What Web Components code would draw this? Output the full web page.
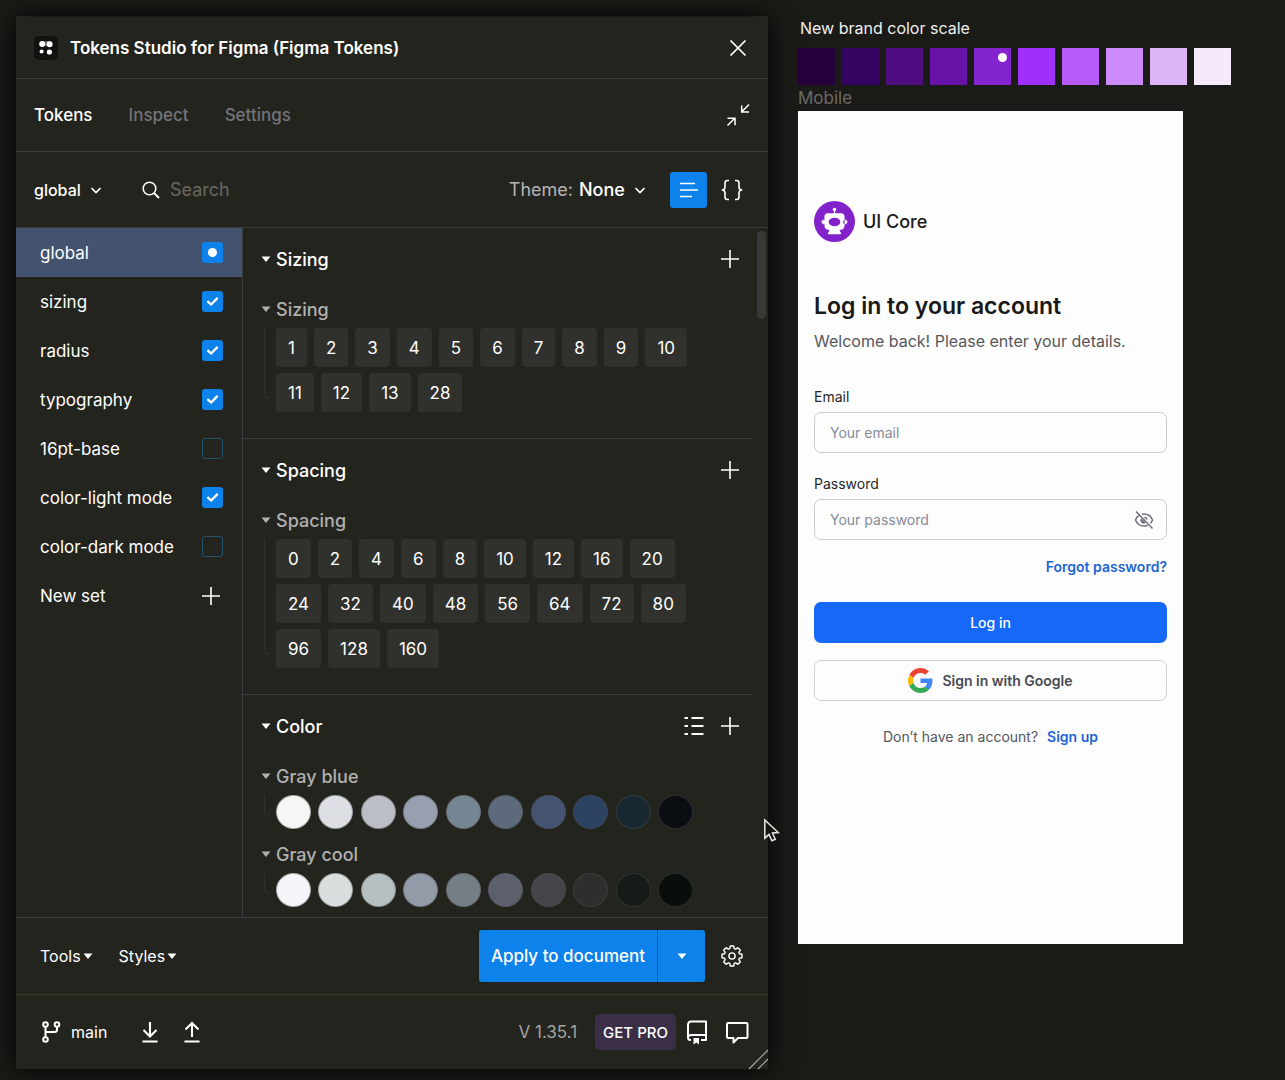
<!DOCTYPE html>
<html lang="en">
<head>
<meta charset="utf-8">
<meta name="viewport" content="width=device-width, initial-scale=1">
<title>Tokens Studio for Figma</title>
<style>
  * { box-sizing: border-box; }
  body {
    margin: 0;
    background: #1a1a16;
    color: #fff;
    font-family: Inter, "Liberation Sans", sans-serif;
    font-size: 16px;
    --panel: #24241e;
    --line: #3a3a40;
    --blue: #0d82ea;
  }
</style>
</head>
<body>
<ts-workspace></ts-workspace>

<script>
const ICONS = {
  logo: [24, '<rect width="24" height="24" rx="5" fill="#11110f"/><g fill="#fff"><circle cx="8.2" cy="8" r="3"/><circle cx="15.6" cy="8.2" r="3"/><circle cx="7.6" cy="15.6" r="2"/><circle cx="15.4" cy="16" r="2.6"/><path d="M8 5h8v5H8z" opacity=".35"/></g>'],
  close: [20, '<path d="M2.5 2.5l15 15M17.5 2.5l-15 15" stroke="currentColor" stroke-width="1.7"/>'],
  minimize: [24, '<path d="M23 1.5L16 8.5M15.700 2.500V9H23M1.500 22.500L8.500 15.500M1.500 15.300H9V22.200" fill="none" stroke="currentColor" stroke-width="1.5"/>'],
  search: [20, '<circle cx="8.500" cy="8.500" r="6.300" fill="none" stroke="currentColor" stroke-width="1.600"/><path d="M13 13l5 5" stroke="currentColor" stroke-width="1.800"/>'],
  chevron: [12, '<path d="M1.500 4l4.500 4.500L10.500 4" fill="none" stroke="currentColor" stroke-width="1.700"/>'],
  lines: [20, '<path d="M1 3.500h15M1 10h18M1 16.500h12" stroke="currentColor" stroke-width="1.500"/>'],
  braces: [24, '<path d="M9 2.500H7.500C5.700 2.500 5 3.300 5 5v4c0 2-.8 3-3.200 3C4.200 12 5 13 5 15v4c0 1.700.7 2.500 2.500 2.500H9M15 2.500h1.500c1.800 0 2.500.8 2.500 2.500v4c0 2 .8 3 3.200 3-2.400 0-3.200 1-3.200 3v4c0 1.700-.7 2.500-2.500 2.500H15" fill="none" stroke="currentColor" stroke-width="1.600"/>'],
  plus: [20, '<path d="M10 1v18M1 10h18" stroke="currentColor" stroke-width="1.600"/>'],
  caret: [10, '<path d="M.500 2.500h9L5 8z" fill="currentColor"/>'],
  list: [20, '<path d="M.500 2H4M7.500 2H19.500M.500 10H4M7.500 10H19.500M.500 18H4M7.500 18H19.500" stroke="currentColor" stroke-width="1.800"/>'],
  gear: [22, '<path d="M9.300 1.500h3.400l.5 2.600 1.500.6 2.200-1.500 2.400 2.400-1.500 2.200.6 1.500 2.600.5v3.400l-2.600.5-.6 1.500 1.500 2.200-2.400 2.400-2.200-1.500-1.500.6-.5 2.600H9.300l-.5-2.600-1.500-.6-2.200 1.500-2.400-2.400 1.500-2.200-.6-1.500L1 13.200V9.800l2.600-.5.6-1.500-1.500-2.200 2.400-2.400 2.200 1.500 1.500-.6z" transform="translate(0 -.5)" fill="none" stroke="currentColor" stroke-width="1.400" stroke-linejoin="round"/><circle cx="11" cy="11" r="3.100" fill="none" stroke="currentColor" stroke-width="1.400"/>'],
  branch: [22, '<g fill="none" stroke="currentColor" stroke-width="2"><circle cx="4.500" cy="3.500" r="2.300"/><circle cx="16" cy="3.500" r="2.300"/><circle cx="4.500" cy="18.500" r="2.300"/><path d="M4.500 6v10M16 6v2.500c0 1.700-.8 2.500-2.500 2.500h-9"/></g>'],
  pull: [22, '<path d="M11 1v14M4.500 9l6.500 6.500L17.500 9M3.500 20.500h15" fill="none" stroke="currentColor" stroke-width="2.100"/>'],
  push: [22, '<path d="M11 16V2M4.500 8.500L11 2l6.500 6.500M3.500 20.500h15" fill="none" stroke="currentColor" stroke-width="2.100"/>'],
  book: [24, '<path d="M6 20H5.500C4 20 3 19 3 17.500v-12C3 2.500 4 1.500 6 1.500h15V20h-5M3.200 17c.5-1.500 1.500-2 3-2H21" fill="none" stroke="currentColor" stroke-width="2" stroke-linejoin="round"/><path d="M8.500 18h5.500v6.500l-2.700-2-2.800 2z" fill="currentColor"/>'],
  comment: [24, '<path d="M3 3h18.500c.6 0 1 .4 1 1v13c0 .6-.4 1-1 1H13l-4.500 4.500V18H3c-.6 0-1-.4-1-1V4c0-.6.4-1 1-1z" fill="none" stroke="currentColor" stroke-width="2" stroke-linejoin="round"/>'],
  resize: [20, '<path d="M1 20L20 1M10 20L20 10" stroke="#aaa" stroke-width="1.200"/>'],
  cursor: [26, '<path d="M5 2v19l4.400-4 2.900 6.700 3.600-1.600-2.900-6.500 6-.5z" fill="#15150f" stroke="#e4e4e4" stroke-width="1.600"/>'],
  eyeoff: [20, '<g fill="none" stroke="currentColor" stroke-width="1.500"><path d="M2 1.500l16.500 17"/><path d="M4.800 5.300C3.200 6.500 2 8.300 1.500 10c1.300 3.500 4.600 6 8.500 6 1.300 0 2.500-.2 3.600-.7M8 4.200c.7-.1 1.300-.2 2-.2 3.900 0 7.200 2.500 8.500 6-.4 1.200-1.100 2.300-2 3.200M10.500 7.200c1.300.3 2.200 1.200 2.400 2.500"/></g><path d="M7.300 8.500a3 3 0 0 0 4.500 4z" fill="currentColor"/>'],
  robot: [42, '<circle cx="21" cy="21" r="21" fill="#8322cb"/><g fill="#fff"><circle cx="21" cy="8.800" r="1.800"/><path d="M20.400 9h1.200v5h-1.200zM14 12.500h14c2 0 3.300 1.500 3.300 3.500v9c0 2.500-1.500 4.200-4 4.500-1 .2-1.300.8-.8 1.600l1.200 1.700c.3.600 0 1.200-.7 1.200H15c-.7 0-1-.6-.7-1.200l1.200-1.700c.5-.8.2-1.400-.8-1.600-2.500-.3-4-2-4-4.500v-9c0-2 1.300-3.500 3.300-3.500zM9.800 19.800H12v3.400H9.800c0 1-1.200 1-1.200 0v-.8c-1.400-.2-1.400-1.600 0-1.800v-.8c0-1 1.200-1 1.200 0zM32.200 19.800H30v3.400h2.200c0 1 1.200 1 1.200 0v-.8c1.400-.2 1.400-1.600 0-1.800v-.8c0-1-1.200-1-1.200 0z"/></g><ellipse cx="21" cy="21.500" rx="6" ry="4.300" fill="#8322cb"/>'],
  google: [48, '<path fill="#4285f4" d="M46.980 24.550c0-1.570-.150-3.090-.380-4.550H24v9.020h12.940c-.580 2.960-2.260 5.480-4.780 7.180l7.730 6c4.510-4.180 7.090-10.360 7.090-17.650z"/><path fill="#ea4335" d="M24 9.500c3.540 0 6.710 1.220 9.210 3.600l6.850-6.850C35.900 2.380 30.470 0 24 0 14.620 0 6.510 5.380 2.560 13.220l7.980 6.190C12.430 13.720 17.740 9.500 24 9.500z"/><path fill="#fbbc05" d="M10.530 28.590A14.500 14.500 0 0 1 9.770 24c0-1.600.270-3.140.760-4.590l-7.980-6.190A23.900 23.900 0 0 0 0 24c0 3.880.920 7.540 2.560 10.780z"/><path fill="#34a853" d="M24 48c6.480 0 11.930-2.130 15.890-5.810l-7.730-6c-2.150 1.450-4.920 2.300-8.160 2.300-6.260 0-11.570-4.220-13.470-9.910l-7.980 6.190C6.510 42.620 14.620 48 24 48z"/>'],
};

const BASE = `
  *, *::before, *::after { box-sizing: border-box; }
  button, input, select { font: inherit; color: inherit; margin: 0; }
  button { border: 0; padding: 0; background: none; cursor: pointer; }
`;

// Small helper: every component only differs in its markup.
function define(tag, render, setup) {
  customElements.define(tag, class extends HTMLElement {
    connectedCallback() {
      if (this.shadowRoot) return;
      this.attachShadow({ mode: 'open' }).innerHTML = `<style>${BASE}</style>` + render(this);
      if (setup) setup(this, this.shadowRoot);
    }
  });
}

define('ts-icon', el => {
  const [box, shape] = ICONS[el.getAttribute('name')];
  const size = el.getAttribute('size') || box;
  return `
    <style>
      :host { display: inline-flex; flex-shrink: 0; vertical-align: top; }
      svg { display: block; overflow: visible; }
    </style>
    <svg width="${size}" height="${size}" viewBox="0 0 ${box} ${box}" aria-hidden="true">${shape}</svg>`;
});

/* ---------- plugin window ---------- */

define('ts-titlebar', () => `
  <style>
    :host { display: flex; align-items: center; gap: 12px; height: 62px; padding: 0 20px 0 18px; border-bottom: 1px solid #3a3a30; }
    h1 { flex: 1; margin: 0; font-size: 17px; font-weight: 600; }
  </style>
  <ts-icon name="logo"></ts-icon>
  <h1><slot></slot></h1>
  <button aria-label="Close"><ts-icon name="close"></ts-icon></button>
`);

define('ts-tabs', () => `
  <style>
    :host { display: flex; align-items: center; justify-content: space-between; height: 73px; padding: 0 18px; border-bottom: 1px solid var(--line); font-size: 17px; }
    nav { display: flex; gap: 36px; }
    button { font-weight: 500; color: #73737a; }
    button.active { color: #fff; }
  </style>
  <nav>
    <button class="active">Tokens</button>
    <button>Inspect</button>
    <button>Settings</button>
  </nav>
  <button class="active" aria-label="Minimize"><ts-icon name="minimize"></ts-icon></button>
`);

define('ts-picker', el => `
  <style>
    :host { display: inline-flex; align-items: center; gap: 6px; }
    label { color: #b4b4b4; }
    .box { display: inline-flex; align-items: center; gap: 9px; }
    select { appearance: none; border: 0; padding: 0; background: none; font-weight: 500; }
  </style>
  <label for="pick"><slot></slot></label>
  <span class="box">
    <select id="pick" aria-label="${el.getAttribute('name')}"><option>${el.getAttribute('value')}</option></select>
    <ts-icon name="chevron"></ts-icon>
  </span>
`);

define('ts-toolbar', () => `
  <style>
    :host { display: flex; align-items: center; height: 76px; padding: 0 24px 0 12px; border-bottom: 1px solid var(--line); }
    .search { flex: 1; display: flex; align-items: center; gap: 9px; min-width: 0; margin-left: 39px; }
    .search, .theme { font-size: 18px; }
    input { flex: 1; min-width: 0; border: 0; padding: 0; background: none; outline: 0; }
    input::placeholder { color: #686862; opacity: 1; }
    .view { display: grid; place-items: center; width: 37px; height: 36px; margin-left: 24px; border-radius: 3px; }
    .view.on { background: var(--blue); }
    .view.code { width: 24px; margin-left: 13px; }
  </style>
  <ts-picker name="Token set" value="global"></ts-picker>
  <div class="search">
    <ts-icon name="search"></ts-icon>
    <input type="text" placeholder="Search" aria-label="Search">
  </div>
  <ts-picker class="theme" name="Theme" value="None">Theme:</ts-picker>
  <button class="view on" aria-label="List view"><ts-icon name="lines"></ts-icon></button>
  <button class="view code" aria-label="JSON view"><ts-icon name="braces"></ts-icon></button>
`);

define('ts-set', el => {
  const state = el.getAttribute('state');
  return `
    <style>
      :host { display: block; }
      :host([active]) { background: #43526f; }
      label { display: flex; align-items: center; justify-content: space-between; height: 49px; padding: 0 19px 0 24px; }
      input {
        appearance: none; display: grid; place-items: center;
        width: 21px; height: 21px; border: 1px solid #22526b; border-radius: 3px;
      }
      input:checked, input:indeterminate { border: 0; background: var(--blue); }
      input:checked::before {
        content: ""; width: 12px; height: 10px; background: #fff;
        clip-path: polygon(0 54%, 14% 38%, 38% 66%, 85% 6%, 100% 22%, 39% 96%);
      }
      input:indeterminate::before { content: ""; width: 9px; height: 9px; border-radius: 50%; background: #fff; }
    </style>
    <label><slot></slot><input type="checkbox" ${state === 'on' ? 'checked' : ''}></label>`;
}, (el, root) => {
  root.querySelector('input').indeterminate = el.getAttribute('state') === 'mixed';
});

define('ts-sidebar', () => `
  <style>
    :host { display: block; flex: 0 0 227px; border-right: 1px solid var(--line); font-size: 17px; }
    .new { display: flex; align-items: center; justify-content: space-between; width: 100%; height: 49px; padding: 0 21px 0 24px; }
  </style>
  <ts-set state="mixed" active>global</ts-set>
  <ts-set state="on">sizing</ts-set>
  <ts-set state="on">radius</ts-set>
  <ts-set state="on">typography</ts-set>
  <ts-set>16pt-base</ts-set>
  <ts-set state="on">color-light mode</ts-set>
  <ts-set>color-dark mode</ts-set>
  <button class="new">New set <ts-icon name="plus"></ts-icon></button>
`);

define('ts-section', el => `
  <style>
    :host { display: block; padding-bottom: 26px; border-bottom: 1px solid var(--line); }
    header { display: flex; align-items: center; justify-content: space-between; height: 62px; padding: 0 13px 0 18px; }
    h2 { margin: 0; font-size: 18px; font-weight: 500; }
    h2 button { display: flex; align-items: center; gap: 5px; }
    .tools { display: flex; gap: 16px; }
    .groups { display: flex; flex-direction: column; gap: 6px; }
  </style>
  <header>
    <h2><button><ts-icon name="caret"></ts-icon>${el.getAttribute('heading')}</button></h2>
    <div class="tools">
      ${el.hasAttribute('list') ? '<button aria-label="Show as list"><ts-icon name="list"></ts-icon></button>' : ''}
      <button aria-label="Add token"><ts-icon name="plus"></ts-icon></button>
    </div>
  </header>
  <div class="groups"><slot></slot></div>
`);

define('ts-group', el => {
  const tokens = (el.getAttribute('tokens') || '').split(' ').filter(Boolean);
  const colors = (el.getAttribute('colors') || '').split(' ').filter(Boolean);
  return `
    <style>
      :host { display: block; }
      h3 { margin: 0; padding-left: 18px; font-size: 18px; font-weight: 500; color: #b0b0b0; }
      h3 button { display: flex; align-items: center; gap: 5px; height: 38px; }
      .body { display: flex; gap: 6px; padding: 0 34px 0 21px; font-size: 17px; }
      .tree { width: 6px; margin-bottom: 14px; border: 1px solid #303033; border-width: 0 0 1px 1px; border-radius: 0 0 0 4px; }
      .items { flex: 1; display: flex; flex-wrap: wrap; gap: 6px 7px; }
      .colors { justify-content: space-between; max-width: 417px; }
      .chip { height: 39px; padding: 0 12px; border-radius: 4px; background: #30302d; }
      .dot { width: 35px; height: 34px; border-radius: 50%; border: 1px solid #50505570; }
    </style>
    <h3><button><ts-icon name="caret"></ts-icon>${el.getAttribute('heading')}</button></h3>
    <div class="body">
      <div class="tree"></div>
      <div class="items ${colors.length ? 'colors' : ''}">
        ${tokens.map(t => `<button class="chip">${t}</button>`).join('')}
        ${colors.map(c => `<button class="dot" style="background:${c}" aria-label="${c}"></button>`).join('')}
      </div>
    </div>`;
});

define('ts-token-list', () => `
  <style>
    :host { flex: 1; display: flex; min-width: 0; overflow: hidden; }
    .list { flex: 1; min-width: 0; }
    .thumb { width: 9px; height: 88px; margin: 3px 2px 0 4px; border-radius: 5px; background: #383836; }
  </style>
  <div class="list">
    <ts-section heading="Sizing">
      <ts-group heading="Sizing" tokens="1 2 3 4 5 6 7 8 9 10 11 12 13 28"></ts-group>
    </ts-section>
    <ts-section heading="Spacing">
      <ts-group heading="Spacing" tokens="0 2 4 6 8 10 12 16 20 24 32 40 48 56 64 72 80 96 128 160"></ts-group>
    </ts-section>
    <ts-section heading="Color" list>
      <ts-group heading="Gray blue" colors="#f6f6f7 #dcdfe4 #bcbec6 #98a0b0 #768592 #5c6a7c #435370 #2b4260 #182831 #0a0e13"></ts-group>
      <ts-group heading="Gray cool" colors="#f3f5f8 #d9dfdf #b7c0c1 #939ba8 #757e84 #5b606c #434548 #2c2f2b #171b17 #090d0c"></ts-group>
    </ts-section>
  </div>
  <div class="thumb"></div>
`);

define('ts-actions', () => `
  <style>
    :host { display: flex; align-items: center; height: 78px; padding: 0 25px 0 24px; border-top: 1px solid var(--line); border-bottom: 1px solid #3a3a24; }
    .menus { flex: 1; display: flex; gap: 26px; }
    .menus button { display: flex; align-items: center; gap: 2px; }
    .apply { display: flex; height: 52px; margin-right: 16px; border-radius: 3px; background: var(--blue); font-size: 17px; font-weight: 500; overflow: hidden; }
    .apply button { padding: 0 12px; }
    .apply .more { display: grid; place-items: center; width: 48px; border-left: 1px solid #0a5cb0; }
  </style>
  <div class="menus">
    <button>Tools<ts-icon name="caret"></ts-icon></button>
    <button>Styles<ts-icon name="caret"></ts-icon></button>
  </div>
  <div class="apply">
    <button>Apply to document</button>
    <button class="more" aria-label="Apply options"><ts-icon name="caret"></ts-icon></button>
  </div>
  <button aria-label="Settings"><ts-icon name="gear"></ts-icon></button>
`);

define('ts-status', () => `
  <style>
    :host { position: relative; display: flex; align-items: center; height: 74px; padding: 0 19px 0 25px; }
    button, a { display: flex; align-items: center; color: inherit; text-decoration: none; }
    .branch { gap: 8px; margin-right: 32px; }
    .pull { margin-right: 20px; }
    .version { margin-left: auto; margin-right: 18px; font-size: 17px; color: #a3a3a3; }
    .pro { height: 36px; padding: 0 8px; margin-right: 9px; border-radius: 5px; background: #3a2f47; font-size: 15px; font-weight: 500; }
    .docs { margin-right: 16px; }
    .grip { position: absolute; right: 0; bottom: 0; }
  </style>
  <button class="branch"><ts-icon name="branch"></ts-icon>main</button>
  <button class="pull" aria-label="Pull"><ts-icon name="pull"></ts-icon></button>
  <button aria-label="Push"><ts-icon name="push"></ts-icon></button>
  <span class="version">V 1.35.1</span>
  <button class="pro">GET PRO</button>
  <a class="docs" href="#docs" aria-label="Docs"><ts-icon name="book"></ts-icon></a>
  <a href="#feedback" aria-label="Feedback"><ts-icon name="comment"></ts-icon></a>
  <ts-icon class="grip" name="resize"></ts-icon>
`);

define('ts-panel', () => `
  <style>
    :host { display: flex; flex-direction: column; min-width: 0; background: var(--panel); box-shadow: 0 0 24px #000, 0 -1px 0 #34343c; }
    .main { flex: 1; display: flex; min-height: 0; overflow: hidden; }
    ts-titlebar, ts-tabs, ts-toolbar, ts-actions, ts-status { flex-shrink: 0; }
  </style>
  <ts-titlebar>Tokens Studio for Figma (Figma Tokens)</ts-titlebar>
  <ts-tabs></ts-tabs>
  <ts-toolbar></ts-toolbar>
  <div class="main">
    <ts-sidebar></ts-sidebar>
    <ts-token-list></ts-token-list>
  </div>
  <ts-actions></ts-actions>
  <ts-status></ts-status>
`);

/* ---------- canvas ---------- */

define('brand-scale', el => {
  const colors = el.getAttribute('colors').split(' ');
  const picked = Number(el.getAttribute('picked'));
  return `
    <style>
      :host { display: block; }
      h2 { margin: 0 0 9px 2px; font-size: 16px; font-weight: 400; line-height: 22px; color: #f0f0f0; }
      .row { display: flex; gap: 7px; }
      .swatch { width: 37px; height: 37px; padding: 5px 4px; }
      .picked::after { content: ""; display: block; width: 9px; height: 9px; margin-left: auto; border-radius: 50%; background: #fff; }
    </style>
    <h2><slot></slot></h2>
    <div class="row">
      ${colors.map((c, i) => `<div class="swatch ${i === picked ? 'picked' : ''}" style="background:${c}"></div>`).join('')}
    </div>`;
});

define('login-field', el => `
  <style>
    :host { display: block; margin-bottom: 21px; }
    label { display: block; margin-bottom: 5px; line-height: 20px; color: #262626; }
    .box { display: flex; align-items: center; height: 41px; padding: 0 12px 0 15px; border: 1px solid #c9cad4; border-radius: 7px; }
    input { flex: 1; min-width: 0; border: 0; padding: 0; background: none; outline: 0; }
    input::placeholder { color: #868b98; opacity: 1; }
    button { display: flex; color: #6c7280; }
  </style>
  <label for="field">${el.getAttribute('label')}</label>
  <div class="box">
    <input id="field" type="${el.getAttribute('type')}" placeholder="${el.getAttribute('placeholder')}">
    ${el.getAttribute('type') === 'password' ? '<button aria-label="Show password"><ts-icon name="eyeoff"></ts-icon></button>' : ''}
  </div>
`);

define('login-screen', () => `
  <style>
    :host { display: block; max-width: 385px; padding: 90px 16px 197px; background: #fdfdfd; color: #55575c; font-size: 14px; }
    .brand { display: flex; align-items: center; gap: 8px; margin-bottom: 48px; font-size: 18px; font-weight: 500; color: #191919; }
    h1 { margin: 0 0 7px; font-size: 23px; line-height: 32px; font-weight: 600; color: #191919; }
    p { margin: 0; }
    .intro { margin-bottom: 34px; font-size: 16px; line-height: 24px; }
    a { color: #1c65d4; font-weight: 600; text-decoration: none; }
    .forgot { margin-top: -4px; margin-bottom: 25px; line-height: 20px; text-align: right; }
    .btn { display: flex; align-items: center; justify-content: center; gap: 9px; width: 100%; height: 41px; border-radius: 7px; font-weight: 500; }
    .primary { margin-bottom: 17px; background: #1669f8; color: #fff; }
    .google { margin-bottom: 26px; border: 1px solid #cfcfdb; font-weight: 600; color: #464a50; }
    .signup { display: flex; justify-content: center; gap: 9px; line-height: 20px; }
  </style>
  <div class="brand"><ts-icon name="robot" size="41"></ts-icon>UI Core</div>
  <h1>Log in to your account</h1>
  <p class="intro">Welcome back! Please enter your details.</p>
  <login-field label="Email" type="email" placeholder="Your email"></login-field>
  <login-field label="Password" type="password" placeholder="Your password"></login-field>
  <p class="forgot"><a href="#forgot">Forgot password?</a></p>
  <button class="btn primary">Log in</button>
  <button class="btn google"><ts-icon name="google" size="25"></ts-icon>Sign in with Google</button>
  <p class="signup">Don’t have an account? <a href="#signup">Sign up</a></p>
`);

define('ts-canvas', () => `
  <style>
    :host { display: block; min-width: 0; }
    .frame { font-size: 17px; line-height: 26px; color: #6b6b68; }
  </style>
  <brand-scale picked="4" colors="#25003c #350361 #500d82 #6912a8 #8324ce #9f2ff9 #b65bfa #cb8af7 #deb4f8 #f4eafb">New brand color scale</brand-scale>
  <div class="frame">Mobile</div>
  <login-screen></login-screen>
`);

define('ts-workspace', () => `
  <style>
    :host {
      position: relative; display: grid; grid-template: minmax(0, 1fr) / minmax(0, 1fr) 471px; gap: 30px;
      height: 100vh; padding: 17px 16px 11px; overflow: hidden;
    }
    .pointer { position: absolute; left: 760px; top: 818px; }
  </style>
  <ts-panel></ts-panel>
  <ts-canvas></ts-canvas>
  <ts-icon class="pointer" name="cursor" size="25"></ts-icon>
`);
</script>
</body>
</html>
